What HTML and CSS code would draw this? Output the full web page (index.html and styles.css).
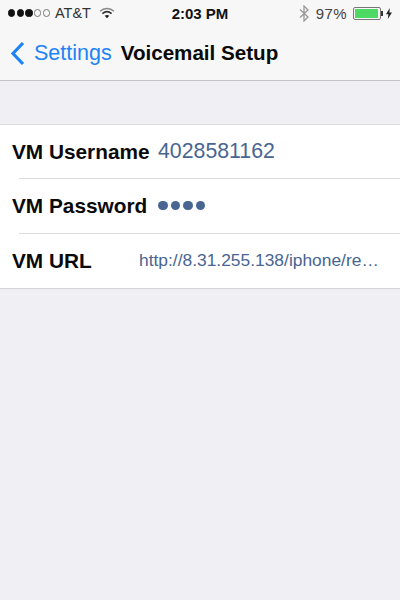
FILE: index.html
```html
<!DOCTYPE html>
<html lang="en">
<head>
  <meta charset="UTF-8">
  <meta name="viewport" content="width=device-width, initial-scale=1.0">
  <title>Voicemail Setup</title>
  <link rel="stylesheet" href="styles.css">
</head>
<body>
  <header class="top">
    <div class="status">
      <div class="status-left">
        <span class="signal">
          <i class="dot"></i><i class="dot"></i><i class="dot"></i><i class="dot off"></i><i class="dot off"></i>
        </span>
        <span class="carrier">AT&amp;T</span>
        <svg class="wifi" width="16" height="12" viewBox="0 0 16 12">
          <path d="M1 4.2C5 .6 11 .6 15 4.2" fill="none" stroke="#888" stroke-width="1.4"/>
          <path d="M3.4 6.6c2.8-2.4 6.4-2.4 9.2 0" fill="none" stroke="#333" stroke-width="1.5"/>
          <path d="M5.7 8.8c1.4-1.1 3.2-1.1 4.6 0L8 11.2z" fill="#222"/>
        </svg>
      </div>
      <div class="clock">2:03 PM</div>
      <div class="status-right">
        <svg class="bt" width="10" height="17" viewBox="0 0 10 17">
          <path d="M1 4.5l8 7.5-4 4V1l4 4-8 7.5" fill="none" stroke="#999" stroke-width="1.3"/>
        </svg>
        <span class="percent">97%</span>
        <span class="battery"><span class="battery-fill"></span></span>
        <span class="battery-tip"></span>
        <svg class="bolt" width="6" height="11" viewBox="0 0 6 11">
          <path d="M3.8 0L0 6.2h2.4L1.8 11 6 4.4H3.4z" fill="#222"/>
        </svg>
      </div>
    </div>
    <nav class="nav">
      <svg class="chevron" width="15" height="25" viewBox="0 0 15 25">
        <path d="M13 2L3 12.5 13 23" fill="none" stroke="#1e84f6" stroke-width="3.2"/>
      </svg>
      <span class="back">Settings</span>
      <h1 class="title">Voicemail Setup</h1>
    </nav>
  </header>

  <section class="group">
    <div class="row">
      <span class="label">VM Username</span>
      <span class="value">4028581162</span>
    </div>
    <div class="row">
      <span class="label">VM Password</span>
      <span class="value secret"><i></i><i></i><i></i><i></i></span>
    </div>
    <div class="row">
      <span class="label">VM URL</span>
      <span class="value url">http://8.31.255.138/iphone/re…</span>
    </div>
  </section>
</body>
</html>
```

FILE: styles.css
```css
* {
  box-sizing: border-box;
}
html, body {
  height: 100%;
}
body {
  margin: 0;
  background: #efeff4;
  font-family: "Liberation Sans", Arial, sans-serif;
  color: #000;
  overflow: hidden;
}
.top {
  height: 81px;
  background: #f7f7f7;
  border-bottom: 1px solid #c4c4c8;
}
.status {
  height: 26px;
  padding: 0 8px 0 8px;
  display: grid;
  grid-template-columns: 1fr auto 1fr;
  align-items: center;
  font-size: 15px;
  color: #333;
}
.status-left, .status-right {
  display: flex;
  align-items: center;
}
.status-right {
  justify-content: flex-end;
}
.signal {
  display: flex;
  gap: 1.5px;
  margin-right: 5px;
}
.dot {
  width: 7.2px;
  height: 7.2px;
  border-radius: 50%;
  background: #111;
  border: 1px solid #111;
}
.dot.off {
  background: none;
  border-color: #777;
}
.carrier {
  font-size: 14.5px;
  margin-right: 8px;
}
.clock {
  font-weight: bold;
  font-size: 15px;
  color: #111;
}
.bt {
  margin-right: 7px;
}
.percent {
  margin-right: 6px;
  letter-spacing: 0.4px;
  color: #444;
}
.battery {
  width: 28px;
  height: 13px;
  padding: 1px;
  border: 1px solid #777;
  border-radius: 2px;
}
.battery-fill {
  display: block;
  height: 100%;
  width: 96%;
  background: #4cd964;
}
.battery-tip {
  width: 2px;
  height: 5px;
  background: #333;
  margin-right: 3px;
}
.nav {
  height: 54px;
  display: flex;
  align-items: center;
  padding-left: 10px;
}
.chevron {
  margin-right: 9px;
}
.back {
  font-size: 21.5px;
  color: #1e84f6;
  margin-right: 9px;
}
.title {
  margin: 0;
  font-size: 20.6px;
  font-weight: bold;
  color: #0a0a0a;
}
.group {
  margin-top: 43px;
  background: #fff;
  border-top: 1px solid #dcdce0;
  border-bottom: 1px solid #d4d4d8;
}
.row {
  height: 55px;
  padding-left: 12px;
  display: flex;
  align-items: center;
  position: relative;
}
.row:first-child {
  height: 53px;
}
.row + .row::before {
  content: "";
  position: absolute;
  top: 0;
  left: 19px;
  right: 0;
  height: 1px;
  background: #dcdce0;
}
.label {
  font-size: 20.8px;
  font-weight: bold;
  color: #0a0a0a;
  width: 146px;
  white-space: nowrap;
}
.value {
  font-size: 21.3px;
  color: #496591;
  white-space: nowrap;
}
.secret {
  display: flex;
  gap: 3px;
}
.secret i {
  width: 9.5px;
  height: 9.5px;
  border-radius: 50%;
  background: #496591;
}
.url {
  font-size: 17.4px;
  margin-left: -19px;
}
```
